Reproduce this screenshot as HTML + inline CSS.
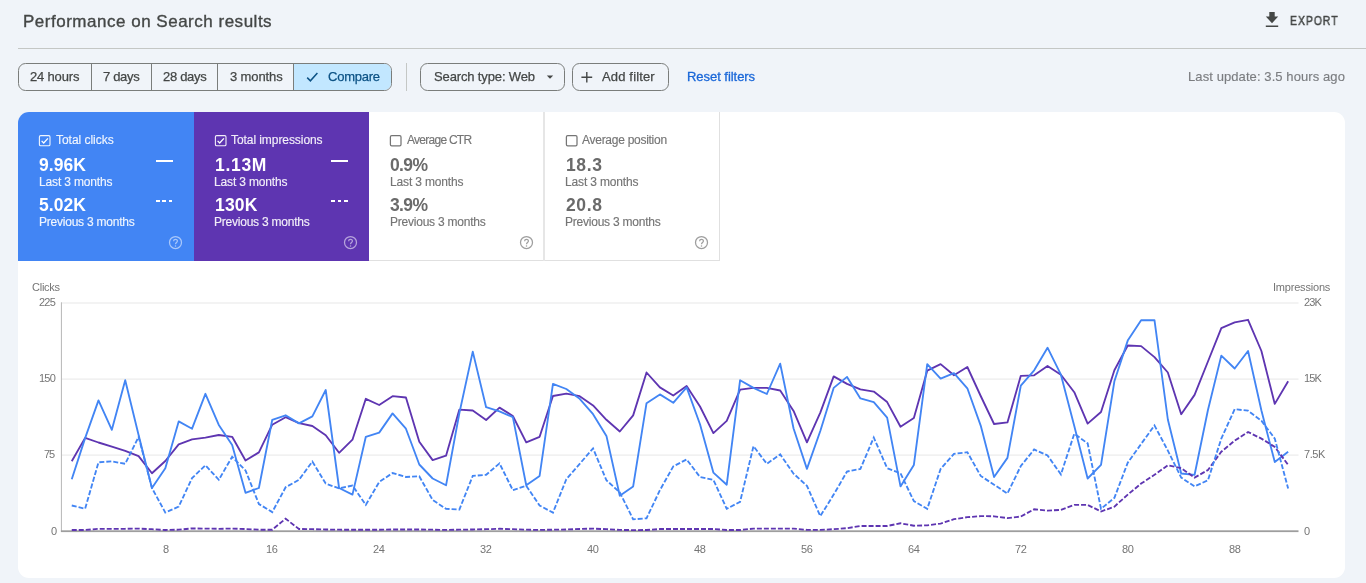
<!DOCTYPE html>
<html><head><meta charset="utf-8"><title>Performance</title>
<style>
html,body{margin:0;padding:0}
body{width:1366px;height:583px;overflow:hidden;position:relative;background:#f0f4f9;font-family:"Liberation Sans",sans-serif}
.abs{position:absolute}
.t{position:absolute;white-space:nowrap;line-height:20px;will-change:transform}
.btn{box-sizing:border-box;border:1px solid #7a7d7b;border-radius:7.5px}
.vd{top:0;width:1px;height:28px;background:#7a7d7b}
</style></head><body>
<span class="t" style="left:22.60px;top:11.51px;font-size:17px;color:#444746;letter-spacing:0.510px;-webkit-text-stroke:0.35px #444746;">Performance on Search results</span>
<svg class="abs" style="left:1264px;top:10px" width="16" height="19" viewBox="0 0 16 19">
<path d="M5.3,2 H10.7 V6.4 H14.2 L8,13.3 L1.8,6.4 H5.3 Z M1.8,15.4 H14.2 V17.1 H1.8 Z" fill="#444746"/></svg>
<span class="t" style="left:1289.80px;top:10.78px;font-size:11.9px;color:#444746;letter-spacing:1.207px;transform:scaleX(0.87);transform-origin:0 0;-webkit-text-stroke:0.5px #444746;">EXPORT</span>
<div class="abs" style="left:18px;top:48px;width:1348px;height:1px;background:#c4c7c5"></div>
<div class="abs btn" style="left:18px;top:63px;width:374px;height:28px;overflow:hidden"><div class="abs" style="left:274px;top:-1px;width:100px;height:29px;background:#c2e7ff"></div><div class="abs vd" style="left:72px"></div><div class="abs vd" style="left:132px"></div><div class="abs vd" style="left:198px"></div><div class="abs vd" style="left:274px"></div></div>
<span class="t" style="left:30.10px;top:67.30px;font-size:13px;color:#444746;letter-spacing:-0.170px;-webkit-text-stroke:0.25px #444746;">24 hours</span>
<span class="t" style="left:102.80px;top:67.30px;font-size:13px;color:#444746;letter-spacing:-0.320px;-webkit-text-stroke:0.25px #444746;">7 days</span>
<span class="t" style="left:162.80px;top:67.30px;font-size:13px;color:#444746;letter-spacing:-0.305px;-webkit-text-stroke:0.25px #444746;">28 days</span>
<span class="t" style="left:229.60px;top:67.30px;font-size:13px;color:#444746;letter-spacing:-0.110px;-webkit-text-stroke:0.25px #444746;">3 months</span>
<svg class="abs" style="left:305px;top:70px" width="14" height="14" viewBox="0 0 14 14"><path d="M2.2,7.6 L5.4,10.8 L12.4,3" fill="none" stroke="#0c5285" stroke-width="1.5"/></svg>
<span class="t" style="left:327.90px;top:67.30px;font-size:13px;color:#0c5285;letter-spacing:-0.244px;-webkit-text-stroke:0.25px #0c5285;">Compare</span>
<div class="abs" style="left:406px;top:63px;width:1px;height:28px;background:#c4c7c5"></div>
<div class="abs btn" style="left:420px;top:63px;width:145px;height:28px"></div>
<span class="t" style="left:433.70px;top:67.30px;font-size:13px;color:#444746;letter-spacing:-0.133px;-webkit-text-stroke:0.25px #444746;">Search type: Web</span>
<svg class="abs" style="left:546px;top:75px" width="8" height="5" viewBox="0 0 8 5"><path d="M0.8,0.6 H7.2 L4,3.8 Z" fill="#444746"/></svg>
<div class="abs btn" style="left:572px;top:63px;width:97px;height:28px"></div>
<svg class="abs" style="left:580px;top:71px" width="13" height="13" viewBox="0 0 13 13"><path d="M6.8,1 V11.6 M1.4,6.3 H12.2" fill="none" stroke="#444746" stroke-width="1.4"/></svg>
<span class="t" style="left:602.20px;top:67.30px;font-size:13px;color:#444746;letter-spacing:0.155px;-webkit-text-stroke:0.25px #444746;">Add filter</span>
<span class="t" style="left:686.90px;top:67.30px;font-size:13px;color:#1a67d8;letter-spacing:-0.044px;-webkit-text-stroke:0.3px #1a67d8;">Reset filters</span>
<span class="t" style="left:1187.80px;top:66.90px;font-size:13px;color:#7b7d80;letter-spacing:0.089px;-webkit-text-stroke:0.15px #7b7d80;">Last update: 3.5 hours ago</span>
<div class="abs" style="left:18.3px;top:112px;width:1326.7px;height:465.5px;background:#fff;border-radius:11px"></div>
<div class="abs" style="left:18.3px;top:112px;width:175.7px;height:148.7px;background:#4285f4;border-top-left-radius:11px"></div>
<div class="abs" style="left:194px;top:112px;width:175.1px;height:148.7px;background:#5e35b1"></div>
<div class="abs" style="left:369.1px;top:112px;width:350.9px;height:149px;box-sizing:border-box;border-right:1px solid #e0e0e0;border-bottom:1px solid #e0e0e0"></div>
<div class="abs" style="left:543.1px;top:112px;width:1.7px;height:148.5px;background:#e6e6e6"></div>
<svg class="abs" style="left:38.3px;top:133.7px" width="14" height="14" viewBox="0 0 14 14"><rect x="1.4" y="1.6" width="10.6" height="10.2" rx="1.3" fill="none" stroke="#fff" stroke-opacity=".92" stroke-width="1.1"/><path d="M3.6,6.9 L5.7,9 L9.9,4.4" fill="none" stroke="#fff" stroke-width="1.3"/></svg><span class="t" style="left:56.00px;top:129.64px;font-size:12px;color:rgba(255,255,255,.9);letter-spacing:-0.029px;-webkit-text-stroke:0.15px rgba(255,255,255,.9);">Total clicks</span><span class="t" style="left:39.30px;top:155.14px;font-size:17.5px;color:#fff;letter-spacing:0.051px;font-weight:700;">9.96K</span><span class="t" style="left:39.00px;top:171.64px;font-size:12px;color:rgba(255,255,255,.9);letter-spacing:-0.156px;-webkit-text-stroke:0.15px rgba(255,255,255,.9);">Last 3 months</span><span class="t" style="left:39.30px;top:195.04px;font-size:17.5px;color:#fff;letter-spacing:0.051px;font-weight:700;">5.02K</span><span class="t" style="left:39.00px;top:211.84px;font-size:12px;color:rgba(255,255,255,.9);letter-spacing:-0.230px;-webkit-text-stroke:0.15px rgba(255,255,255,.9);">Previous 3 months</span><div class="abs" style="left:156.0px;top:159.9px;width:16.8px;height:1.9px;background:#fff"></div><div class="abs" style="left:156.0px;top:200.3px;width:3.7px;height:1.6px;background:#fff"></div><div class="abs" style="left:162.3px;top:200.3px;width:3.7px;height:1.6px;background:#fff"></div><div class="abs" style="left:168.6px;top:200.3px;width:3.7px;height:1.6px;background:#fff"></div><svg class="abs" style="left:167.9px;top:235px" width="15" height="15" viewBox="0 0 15 15"><circle cx="7.5" cy="7.5" r="6" fill="none" stroke="rgba(255,255,255,.55)" stroke-width="1.25"/><path d="M5.6,6.2 C5.6,3.8 9.4,3.8 9.4,6.1 C9.4,7.5 7.5,7.6 7.5,9.2" fill="none" stroke="rgba(255,255,255,.55)" stroke-width="1.2"/><circle cx="7.5" cy="10.9" r="0.75" fill="rgba(255,255,255,.55)"/></svg>
<svg class="abs" style="left:213.7px;top:133.7px" width="14" height="14" viewBox="0 0 14 14"><rect x="1.4" y="1.6" width="10.6" height="10.2" rx="1.3" fill="none" stroke="#fff" stroke-opacity=".92" stroke-width="1.1"/><path d="M3.6,6.9 L5.7,9 L9.9,4.4" fill="none" stroke="#fff" stroke-width="1.3"/></svg><span class="t" style="left:231.40px;top:129.64px;font-size:12px;color:rgba(255,255,255,.9);letter-spacing:-0.069px;-webkit-text-stroke:0.15px rgba(255,255,255,.9);">Total impressions</span><span class="t" style="left:214.70px;top:155.14px;font-size:17.5px;color:#fff;letter-spacing:0.691px;font-weight:700;">1.13M</span><span class="t" style="left:214.40px;top:171.64px;font-size:12px;color:rgba(255,255,255,.9);letter-spacing:-0.156px;-webkit-text-stroke:0.15px rgba(255,255,255,.9);">Last 3 months</span><span class="t" style="left:214.70px;top:195.04px;font-size:17.5px;color:#fff;letter-spacing:0.188px;font-weight:700;">130K</span><span class="t" style="left:214.40px;top:211.84px;font-size:12px;color:rgba(255,255,255,.9);letter-spacing:-0.230px;-webkit-text-stroke:0.15px rgba(255,255,255,.9);">Previous 3 months</span><div class="abs" style="left:331.4px;top:159.9px;width:16.8px;height:1.9px;background:#fff"></div><div class="abs" style="left:331.4px;top:200.3px;width:3.7px;height:1.6px;background:#fff"></div><div class="abs" style="left:337.7px;top:200.3px;width:3.7px;height:1.6px;background:#fff"></div><div class="abs" style="left:344.0px;top:200.3px;width:3.7px;height:1.6px;background:#fff"></div><svg class="abs" style="left:343.3px;top:235px" width="15" height="15" viewBox="0 0 15 15"><circle cx="7.5" cy="7.5" r="6" fill="none" stroke="rgba(255,255,255,.55)" stroke-width="1.25"/><path d="M5.6,6.2 C5.6,3.8 9.4,3.8 9.4,6.1 C9.4,7.5 7.5,7.6 7.5,9.2" fill="none" stroke="rgba(255,255,255,.55)" stroke-width="1.2"/><circle cx="7.5" cy="10.9" r="0.75" fill="rgba(255,255,255,.55)"/></svg>
<svg class="abs" style="left:389.2px;top:133.7px" width="14" height="14" viewBox="0 0 14 14"><rect x="1.4" y="1.6" width="10.6" height="10.2" rx="1.3" fill="none" stroke="#757575" stroke-width="1.25"/></svg><span class="t" style="left:406.90px;top:129.64px;font-size:12px;color:#757575;letter-spacing:-0.737px;-webkit-text-stroke:0.15px #757575;">Average CTR</span><span class="t" style="left:390.20px;top:155.14px;font-size:17.5px;color:#6a6a6a;letter-spacing:-0.629px;font-weight:700;">0.9%</span><span class="t" style="left:389.90px;top:171.64px;font-size:12px;color:#757575;letter-spacing:-0.156px;-webkit-text-stroke:0.15px #757575;">Last 3 months</span><span class="t" style="left:390.20px;top:195.04px;font-size:17.5px;color:#6a6a6a;letter-spacing:-0.629px;font-weight:700;">3.9%</span><span class="t" style="left:389.90px;top:211.84px;font-size:12px;color:#757575;letter-spacing:-0.230px;-webkit-text-stroke:0.15px #757575;">Previous 3 months</span><svg class="abs" style="left:518.8px;top:235px" width="15" height="15" viewBox="0 0 15 15"><circle cx="7.5" cy="7.5" r="6" fill="none" stroke="#9e9e9e" stroke-width="1.25"/><path d="M5.6,6.2 C5.6,3.8 9.4,3.8 9.4,6.1 C9.4,7.5 7.5,7.6 7.5,9.2" fill="none" stroke="#9e9e9e" stroke-width="1.2"/><circle cx="7.5" cy="10.9" r="0.75" fill="#9e9e9e"/></svg>
<svg class="abs" style="left:564.6px;top:133.7px" width="14" height="14" viewBox="0 0 14 14"><rect x="1.4" y="1.6" width="10.6" height="10.2" rx="1.3" fill="none" stroke="#757575" stroke-width="1.25"/></svg><span class="t" style="left:582.30px;top:129.64px;font-size:12px;color:#757575;letter-spacing:-0.272px;-webkit-text-stroke:0.15px #757575;">Average position</span><span class="t" style="left:565.60px;top:155.14px;font-size:17.5px;color:#6a6a6a;letter-spacing:0.613px;font-weight:700;">18.3</span><span class="t" style="left:565.30px;top:171.64px;font-size:12px;color:#757575;letter-spacing:-0.156px;-webkit-text-stroke:0.15px #757575;">Last 3 months</span><span class="t" style="left:565.60px;top:195.04px;font-size:17.5px;color:#6a6a6a;letter-spacing:0.613px;font-weight:700;">20.8</span><span class="t" style="left:565.30px;top:211.84px;font-size:12px;color:#757575;letter-spacing:-0.230px;-webkit-text-stroke:0.15px #757575;">Previous 3 months</span><svg class="abs" style="left:694.2px;top:235px" width="15" height="15" viewBox="0 0 15 15"><circle cx="7.5" cy="7.5" r="6" fill="none" stroke="#9e9e9e" stroke-width="1.25"/><path d="M5.6,6.2 C5.6,3.8 9.4,3.8 9.4,6.1 C9.4,7.5 7.5,7.6 7.5,9.2" fill="none" stroke="#9e9e9e" stroke-width="1.2"/><circle cx="7.5" cy="10.9" r="0.75" fill="#9e9e9e"/></svg>
<svg class="abs" style="left:0;top:0" width="1366" height="583" viewBox="0 0 1366 583"><rect x="61.5" y="302.4" width="1237" height="1.2" fill="#ebebeb"/><rect x="61.5" y="378.5" width="1237" height="1.2" fill="#ebebeb"/><rect x="61.5" y="454.5" width="1237" height="1.2" fill="#ebebeb"/><rect x="60.9" y="302.3" width="1.1" height="229.5" fill="#bdbdbd"/><rect x="60.9" y="530.3" width="1237.6" height="1.8" fill="#9e9e9e"/><path d="M71.75,461.2 L85.12,437.9 L98.48,442.5 L111.85,446.7 L125.22,450.9 L138.59,456.1 L151.95,473.3 L165.32,461.0 L178.69,444.3 L192.05,439.4 L205.42,437.7 L218.79,435.0 L232.15,436.8 L245.52,460.5 L258.89,452.4 L272.25,424.7 L285.62,417.2 L298.99,423.2 L312.36,426.0 L325.72,435.3 L339.09,452.8 L352.46,439.7 L365.82,398.8 L379.19,405.0 L392.56,396.2 L405.93,397.5 L419.29,441.8 L432.66,460.1 L446.03,455.7 L459.39,409.6 L472.76,410.5 L486.13,420.0 L499.49,407.6 L512.86,416.0 L526.23,442.3 L539.60,436.8 L552.96,396.0 L566.33,393.6 L579.70,396.2 L593.06,405.4 L606.43,419.8 L619.80,431.5 L633.16,415.4 L646.53,372.5 L659.90,387.4 L673.26,395.5 L686.63,386.1 L700.00,406.5 L713.37,433.1 L726.73,420.9 L740.10,389.6 L753.47,387.9 L766.83,387.9 L780.20,390.5 L793.57,410.9 L806.94,442.3 L820.30,412.6 L833.67,376.4 L847.04,383.9 L860.40,389.4 L873.77,391.6 L887.14,402.1 L900.50,426.8 L913.87,418.0 L927.24,370.7 L940.61,364.1 L953.97,375.3 L967.34,367.0 L980.71,396.0 L994.07,424.0 L1007.44,422.4 L1020.81,375.8 L1034.17,375.3 L1047.54,365.9 L1060.91,374.7 L1074.28,392.2 L1087.64,423.6 L1101.01,412.0 L1114.38,370.3 L1127.74,345.5 L1141.11,346.1 L1154.48,357.1 L1167.84,372.5 L1181.21,414.2 L1194.58,394.9 L1207.95,361.5 L1221.31,328.1 L1234.68,322.4 L1248.05,319.8 L1261.41,351.0 L1274.78,403.9 L1288.15,381.3" fill="none" stroke="#5e35b1" stroke-width="1.85" stroke-linejoin="round"/><path d="M71.75,479.2 L85.12,438.1 L98.48,400.4 L111.85,429.8 L125.22,380.2 L138.59,435.0 L151.95,488.0 L165.32,468.2 L178.69,421.4 L192.05,428.7 L205.42,393.8 L218.79,424.9 L232.15,445.1 L245.52,492.8 L258.89,488.0 L272.25,419.8 L285.62,415.3 L298.99,423.4 L312.36,416.4 L325.72,390.0 L339.09,488.0 L352.46,494.6 L365.82,436.8 L379.19,432.6 L392.56,413.4 L405.93,428.7 L419.29,464.5 L432.66,478.5 L446.03,485.3 L459.39,413.0 L472.76,351.6 L486.13,407.2 L499.49,411.4 L512.86,417.1 L526.23,485.3 L539.60,475.9 L552.96,383.9 L566.33,389.0 L579.70,398.8 L593.06,414.2 L606.43,435.9 L619.80,495.7 L633.16,486.4 L646.53,403.2 L659.90,394.4 L673.26,402.8 L686.63,387.4 L700.00,424.2 L713.37,472.6 L726.73,484.7 L740.10,380.2 L753.47,387.9 L766.83,394.0 L780.20,363.7 L793.57,428.5 L806.94,468.9 L820.30,431.0 L833.67,387.9 L847.04,376.9 L860.40,398.4 L873.77,402.1 L887.14,417.6 L900.50,486.4 L913.87,464.9 L927.24,364.1 L940.61,378.6 L953.97,373.1 L967.34,388.3 L980.71,425.6 L994.07,477.0 L1007.44,457.9 L1020.81,385.7 L1034.17,370.3 L1047.54,347.7 L1060.91,374.7 L1074.28,426.0 L1087.64,478.5 L1101.01,464.9 L1114.38,381.3 L1127.74,340.6 L1141.11,320.2 L1154.48,320.2 L1167.84,419.5 L1181.21,473.5 L1194.58,474.8 L1207.95,410.0 L1221.31,355.6 L1234.68,368.5 L1248.05,351.0 L1261.41,410.5 L1274.78,462.1 L1288.15,451.7" fill="none" stroke="#4285f4" stroke-width="1.85" stroke-linejoin="round"/><path d="M71.75,530.0 L85.12,530.0 L98.48,528.8 L111.85,528.8 L125.22,528.8 L138.59,528.6 L151.95,529.2 L165.32,530.0 L178.69,529.7 L192.05,528.4 L205.42,528.6 L218.79,528.8 L232.15,528.6 L245.52,529.0 L258.89,529.7 L272.25,529.7 L285.62,518.7 L298.99,529.0 L312.36,529.2 L325.72,529.5 L339.09,529.7 L352.46,529.7 L365.82,529.7 L379.19,529.7 L392.56,529.5 L405.93,529.5 L419.29,529.5 L432.66,529.7 L446.03,529.9 L459.39,529.7 L472.76,529.5 L486.13,529.2 L499.49,528.8 L512.86,529.2 L526.23,529.7 L539.60,529.9 L552.96,529.7 L566.33,529.5 L579.70,529.0 L593.06,528.6 L606.43,529.2 L619.80,529.9 L633.16,530.1 L646.53,530.0 L659.90,529.0 L673.26,529.0 L686.63,529.0 L700.00,529.0 L713.37,529.0 L726.73,530.0 L740.10,530.0 L753.47,528.6 L766.83,528.6 L780.20,528.6 L793.57,528.6 L806.94,529.9 L820.30,529.9 L833.67,529.2 L847.04,528.2 L860.40,526.0 L873.77,526.0 L887.14,526.0 L900.50,523.3 L913.87,525.7 L927.24,525.3 L940.61,523.6 L953.97,519.2 L967.34,517.2 L980.71,516.1 L994.07,516.3 L1007.44,518.1 L1020.81,516.5 L1034.17,509.3 L1047.54,510.6 L1060.91,509.9 L1074.28,504.9 L1087.64,504.9 L1101.01,511.5 L1114.38,506.6 L1127.74,494.6 L1141.11,483.6 L1154.48,474.8 L1167.84,465.3 L1181.21,468.2 L1194.58,477.6 L1207.95,470.0 L1221.31,451.7 L1234.68,440.7 L1248.05,432.0 L1261.41,438.6 L1274.78,446.9 L1288.15,464.9" fill="none" stroke="#5e35b1" stroke-width="1.85" stroke-dasharray="5 2"/><path d="M71.75,505.5 L85.12,508.8 L98.48,462.3 L111.85,461.4 L125.22,463.8 L138.59,436.8 L151.95,488.0 L165.32,512.6 L178.69,506.6 L192.05,478.1 L205.42,465.3 L218.79,479.8 L232.15,456.8 L245.52,470.4 L258.89,504.0 L272.25,512.1 L285.62,487.3 L298.99,479.8 L312.36,461.6 L325.72,483.6 L339.09,488.4 L352.46,485.5 L365.82,504.9 L379.19,482.0 L392.56,473.0 L405.93,477.0 L419.29,476.3 L432.66,500.0 L446.03,508.8 L459.39,509.5 L472.76,475.9 L486.13,474.8 L499.49,463.4 L512.86,490.2 L526.23,485.8 L539.60,505.5 L552.96,512.6 L566.33,479.2 L579.70,463.8 L593.06,448.4 L606.43,480.3 L619.80,492.4 L633.16,519.4 L646.53,518.3 L659.90,490.2 L673.26,466.4 L686.63,459.4 L700.00,477.0 L713.37,479.8 L726.73,508.8 L740.10,501.8 L753.47,446.2 L766.83,463.8 L780.20,454.4 L793.57,473.7 L806.94,485.8 L820.30,516.1 L833.67,494.6 L847.04,471.5 L860.40,468.9 L873.77,437.5 L887.14,468.2 L900.50,473.3 L913.87,501.1 L927.24,508.8 L940.61,468.9 L953.97,453.9 L967.34,452.2 L980.71,475.9 L994.07,484.7 L1007.44,493.5 L1020.81,466.0 L1034.17,449.5 L1047.54,455.5 L1060.91,474.4 L1074.28,433.7 L1087.64,443.4 L1101.01,508.8 L1114.38,497.9 L1127.74,462.7 L1141.11,444.0 L1154.48,425.4 L1167.84,450.6 L1181.21,477.6 L1194.58,486.4 L1207.95,480.3 L1221.31,438.6 L1234.68,409.2 L1248.05,410.7 L1261.41,420.7 L1274.78,438.6 L1288.15,488.6" fill="none" stroke="#4285f4" stroke-width="1.85" stroke-dasharray="5 2"/></svg>
<span class="t" style="left:32.30px;top:277.49px;font-size:11px;color:#757575;letter-spacing:-0.246px;">Clicks</span>
<span class="t" style="left:1273.00px;top:277.49px;font-size:11px;color:#757575;letter-spacing:-0.200px;">Impressions</span>
<span class="t" style="left:38.80px;top:292.19px;font-size:11px;color:#757575;letter-spacing:-0.777px;">225</span>
<span class="t" style="left:38.80px;top:368.29px;font-size:11px;color:#757575;letter-spacing:-0.777px;">150</span>
<span class="t" style="left:44.40px;top:444.29px;font-size:11px;color:#757575;letter-spacing:-1.035px;">75</span>
<span class="t" style="left:50.60px;top:520.79px;font-size:11px;color:#757575;letter-spacing:0.000px;">0</span>
<span class="t" style="left:1304.30px;top:292.19px;font-size:11px;color:#757575;letter-spacing:-0.886px;">23K</span>
<span class="t" style="left:1304.30px;top:368.29px;font-size:11px;color:#757575;letter-spacing:-0.886px;">15K</span>
<span class="t" style="left:1304.30px;top:444.29px;font-size:11px;color:#757575;letter-spacing:-0.443px;">7.5K</span>
<span class="t" style="left:1304.30px;top:520.79px;font-size:11px;color:#757575;letter-spacing:0.000px;">0</span>
<span class="t" style="left:162.90px;top:538.89px;font-size:11px;color:#757575;letter-spacing:0.000px;">8</span>
<span class="t" style="left:265.80px;top:538.89px;font-size:11px;color:#757575;letter-spacing:-0.435px;">16</span>
<span class="t" style="left:372.80px;top:538.89px;font-size:11px;color:#757575;letter-spacing:-0.435px;">24</span>
<span class="t" style="left:479.80px;top:538.89px;font-size:11px;color:#757575;letter-spacing:-0.435px;">32</span>
<span class="t" style="left:586.80px;top:538.89px;font-size:11px;color:#757575;letter-spacing:-0.435px;">40</span>
<span class="t" style="left:693.80px;top:538.89px;font-size:11px;color:#757575;letter-spacing:-0.435px;">48</span>
<span class="t" style="left:800.80px;top:538.89px;font-size:11px;color:#757575;letter-spacing:-0.435px;">56</span>
<span class="t" style="left:907.80px;top:538.89px;font-size:11px;color:#757575;letter-spacing:-0.435px;">64</span>
<span class="t" style="left:1014.80px;top:538.89px;font-size:11px;color:#757575;letter-spacing:-0.435px;">72</span>
<span class="t" style="left:1121.80px;top:538.89px;font-size:11px;color:#757575;letter-spacing:-0.435px;">80</span>
<span class="t" style="left:1228.80px;top:538.89px;font-size:11px;color:#757575;letter-spacing:-0.435px;">88</span>
</body></html>
